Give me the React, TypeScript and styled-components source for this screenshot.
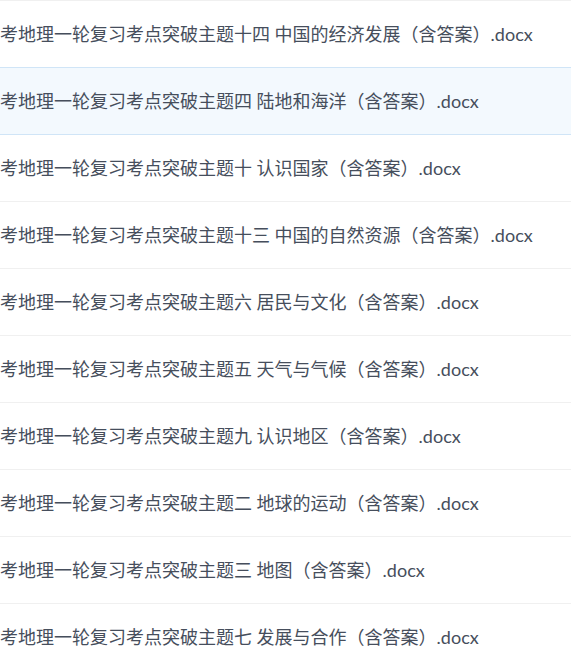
import React from "react";
import styled, { createGlobalStyle } from "styled-components";

const Global = createGlobalStyle`
  html, body { margin: 0; padding: 0; background: #ffffff; }
  body { overflow: hidden; }
`;

const List = styled.ul`
  list-style: none;
  margin: 0;
  padding: 0;
  width: 571px;
  font-family: "Lato", "Noto Sans CJK SC", sans-serif;
`;

const Row = styled.li<{ $active?: boolean }>`
  display: flex;
  align-items: center;
  height: 66px;
  border-top: 1px solid ${(p) => (p.$active ? "#d0e5f7" : "#f0f0f0")};
  background: ${(p) => (p.$active ? "#f3f9fe" : "#ffffff")};
  box-shadow: ${(p) => (p.$active ? "0 1px 0 #d0e5f7" : "none")};
  position: relative;
  z-index: ${(p) => (p.$active ? 1 : 0)};
`;

const Name = styled.span`
  font-size: 18px;
  line-height: 24px;
  color: #464e5c;
  white-space: nowrap;
`;

const files = [
  "考地理一轮复习考点突破主题十四 中国的经济发展（含答案）.docx",
  "考地理一轮复习考点突破主题四 陆地和海洋（含答案）.docx",
  "考地理一轮复习考点突破主题十 认识国家（含答案）.docx",
  "考地理一轮复习考点突破主题十三 中国的自然资源（含答案）.docx",
  "考地理一轮复习考点突破主题六 居民与文化（含答案）.docx",
  "考地理一轮复习考点突破主题五 天气与气候（含答案）.docx",
  "考地理一轮复习考点突破主题九 认识地区（含答案）.docx",
  "考地理一轮复习考点突破主题二 地球的运动（含答案）.docx",
  "考地理一轮复习考点突破主题三 地图（含答案）.docx",
  "考地理一轮复习考点突破主题七 发展与合作（含答案）.docx",
];

export default function App() {
  return (
    <>
      <Global />
      <List>
        {files.map((f, i) => (
          <Row key={f} $active={i === 1}>
            <Name>{f}</Name>
          </Row>
        ))}
      </List>
    </>
  );
}
